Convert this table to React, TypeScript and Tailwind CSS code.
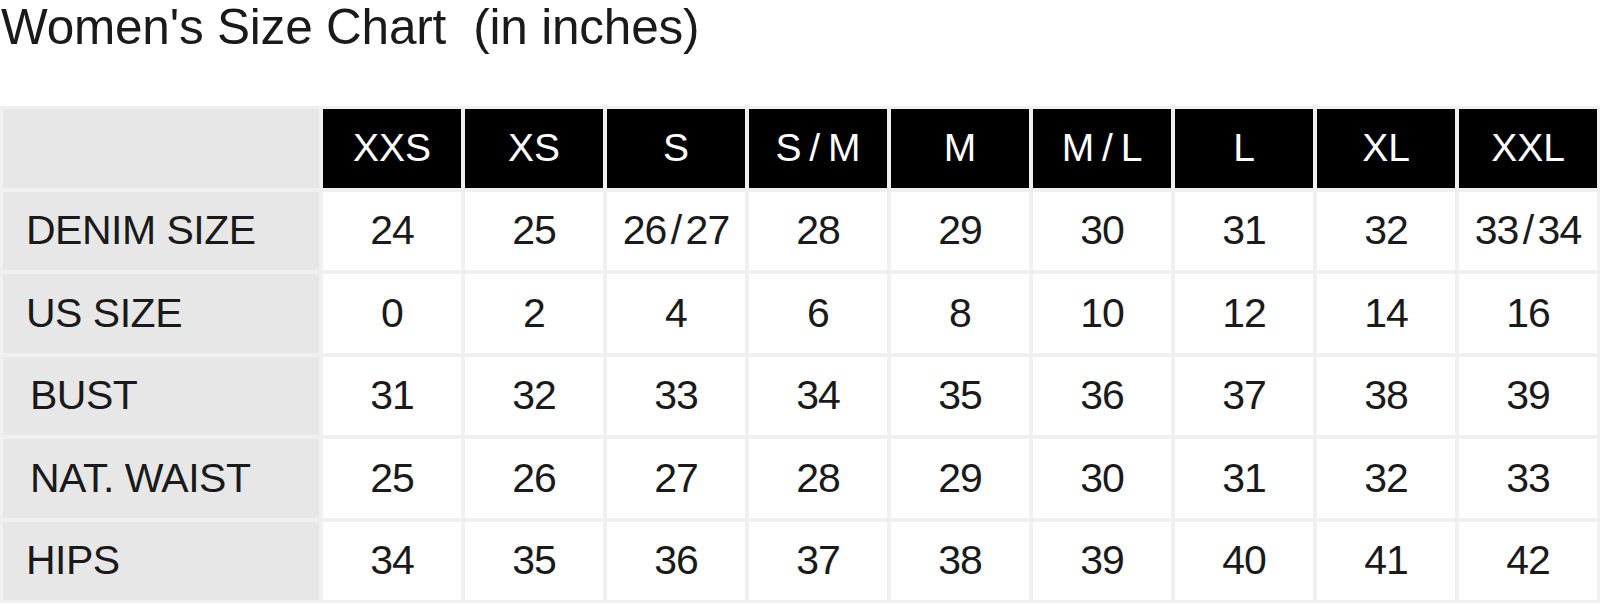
import React from "react";

const sizes = ["XXS", "XS", "S", "S / M", "M", "M / L", "L", "XL", "XXL"];

const rows: { label: string; indent: boolean; values: string[] }[] = [
  { label: "DENIM SIZE", indent: false, values: ["24", "25", "26 / 27", "28", "29", "30", "31", "32", "33 / 34"] },
  { label: "US SIZE", indent: false, values: ["0", "2", "4", "6", "8", "10", "12", "14", "16"] },
  { label: "BUST", indent: true, values: ["31", "32", "33", "34", "35", "36", "37", "38", "39"] },
  { label: "NAT. WAIST", indent: true, values: ["25", "26", "27", "28", "29", "30", "31", "32", "33"] },
  { label: "HIPS", indent: false, values: ["34", "35", "36", "37", "38", "39", "40", "41", "42"] },
];

export default function App() {
  return (
    <div
      className="w-[1600px] h-[606px] overflow-hidden bg-white text-[#1a1a1a]"
      style={{ fontFamily: '"Liberation Sans", Arial, Helvetica, sans-serif' }}
    >
      <div className="h-[106px] pt-[3px] pl-[1px]">
        <h1 className="text-[49.5px] leading-[48px] font-normal whitespace-pre tracking-[-0.2px]">
          Women's Size Chart{"  "}(in inches)
        </h1>
      </div>
      <div className="bg-[#f0f0f0] p-[3px] grid grid-cols-[316px_repeat(9,138px)] grid-rows-[repeat(6,78.5px)] gap-x-[4px] gap-y-[4px]">
        <div className="bg-[#e7e7e7]" />
        {sizes.map((s) => (
          <div
            key={s}
            className="bg-black text-white flex items-center justify-center text-[39px] [word-spacing:-3px]"
          >
            {s}
          </div>
        ))}
        {rows.map((r) => (
          <React.Fragment key={r.label}>
            <div
              className={
                "bg-[#e7e7e7] flex items-center text-[41px] tracking-[-0.5px] " +
                (r.indent ? "pl-[27px]" : "pl-[23px]")
              }
            >
              {r.label}
            </div>
            {r.values.map((v, i) => (
              <div
                key={i}
                className="bg-white flex items-center justify-center text-[41px] tracking-[-1px] [word-spacing:-6px]"
              >
                {v}
              </div>
            ))}
          </React.Fragment>
        ))}
      </div>
    </div>
  );
}
